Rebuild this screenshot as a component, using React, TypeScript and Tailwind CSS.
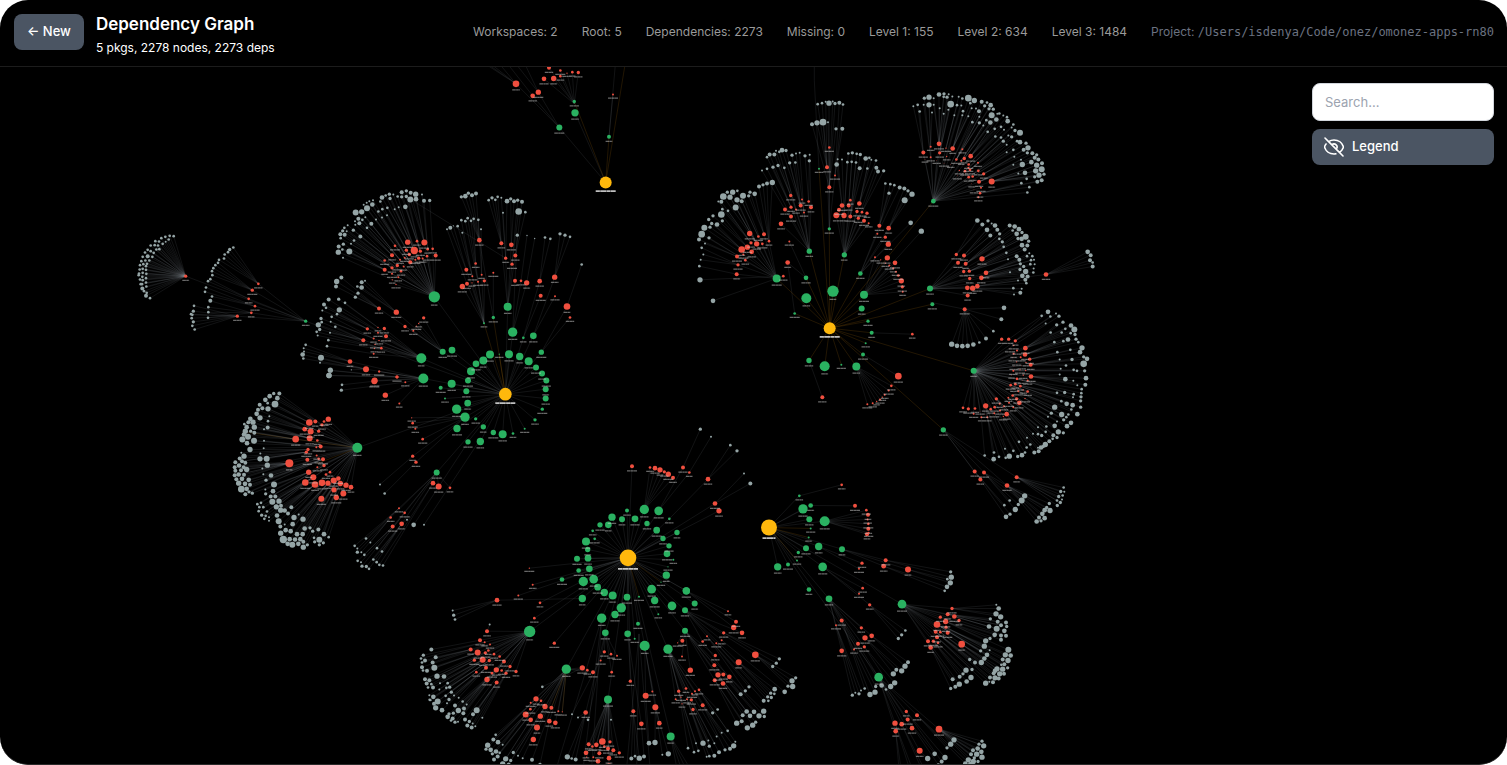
type Dot = { x: number; y: number; r: number };
type Kind = "root" | "direct" | "level1" | "level2";
type Edge = { a: Dot; b: Dot; warm?: boolean };

const FILL: Record<Kind, string> = {
  root: "#ffb80c",
  direct: "#2ab161",
  level1: "#f04f3f",
  level2: "#95a5a6",
};

const UNIT = 3;
const edges: Edge[] = [];
const dots: { d: Dot; kind: Kind }[] = [];

/** Parses "x y r, x y r, ..." in local units; the radius falls back to a default. */
function parse(text: string, ox: number, oy: number, fallback: number): Dot[] {
  return text
    .split(",")
    .map((s) => s.trim())
    .filter(Boolean)
    .map((s) => {
      const [x, y, r = fallback] = s.split(/\s+/).map(Number);
      return { x: ox + x / UNIT, y: oy + y / UNIT, r: r / UNIT };
    });
}

/** Picks the parent that lies closest to the ray from the hub to the leaf. */
function parentOf(leaf: Dot, hub: Dot, parents: Dot[]): Dot {
  const dx = leaf.x - hub.x;
  const dy = leaf.y - hub.y;
  const len = Math.hypot(dx, dy) || 1;
  let best = parents[0];
  let cost = Infinity;
  for (const p of parents) {
    const away = Math.abs((p.x - hub.x) * dy - (p.y - hub.y) * dx) / len;
    const c = (away + 1) / (p.r + 0.4);
    if (c < cost) {
      cost = c;
      best = p;
    }
  }
  return best;
}

function frame(ox: number, oy: number) {
  const point = (x: number, y: number): Dot => ({ x: ox + x / UNIT, y: oy + y / UNIT, r: 1 });
  return {
    root(x: number, y: number, r: number) {
      dots.push({ d: { ...point(x, y), r: r / UNIT }, kind: "root" });
    },
    ring(hx: number, hy: number, nodes: string, warm = false) {
      const hub = point(hx, hy);
      for (const d of parse(nodes, ox, oy, 8)) {
        dots.push({ d, kind: "direct" });
        edges.push({ a: hub, b: d, warm });
      }
    },
    fan(hx: number, hy: number, mids: string, leaves = "") {
      const hub = point(hx, hy);
      const parents = parse(mids, ox, oy, 4);
      for (const d of parents) {
        dots.push({ d, kind: "level1" });
        edges.push({ a: hub, b: d });
      }
      for (const d of parse(leaves, ox, oy, 4)) {
        dots.push({ d, kind: "level2" });
        edges.push({ a: parents.length ? parentOf(d, hub, parents) : hub, b: d });
      }
    },
    link(ax: number, ay: number, bx: number, by: number, warm = false) {
      edges.push({ a: point(ax, ay), b: point(bx, by), warm });
    },
  };
}

/* Far left packages */
const west = frame(130, 180);
west.fan(526, 422, "167 287 5", "131 167,119 166,106 169,116 177,94 173,87 183,76 182,98 190,107 184 3,84 195,74 194,62 195,79 207,88 206,53 208,71 217,62 212,45 216,53 227 6,67 229,38 229,46 240,58 240,34 242,40 251,51 250,30 254,48 257,38 265,29 267,48 268,38 277,27 279,49 280,37 289,26 284,48 293,30 297,38 299,48 306,36 311,32 311,49 318,37 324 6,42 332,50 337,48 346 6,60 353");
west.fan(526, 422, "385 310 4,367 329 5,356 355 4,375 377 4,364 397 4", "310 201,299 207 5,294 215,284 222,282 234,267 238,264 247,256 254,250 263,246 272,247 284,241 296,234 302,228 321,225 334,246 348,241 361 6,235 380,235 395,234 412");
west.fan(526, 422, "322 407 5", "192 376,190 392 5,187 403,183 401,185 413,190 424 5,187 436,194 447");
west.fan(913, 349,
  "833 185 8,861 182 4,883 186 9,853 210 11,829 209 5,795 196 4,786 224 6,764 240 4,764 268 6,786 262 5,802 255 5,810 238 3,871 212 5,893 206 4,908 205 4,917 225 6,891 227 4,838 222 5,841 245 6,866 233 5,856 238 3,878 234 3,824 232 3,821 258 3,813 272 4,786 280 3,805 290 3,798 312 2,787 298 2",
  "899 60 5,882 61 6,876 42 3,857 41 8,842 37 6,829 31 5,829 48 5,815 35 6,815 49 5,803 48,790 42 3,778 41 5,780 54 5,767 45,756 51 7,751 63,858 56 7,841 57 9,826 79 7,806 80 3,794 86 3,772 82,757 86,745 93,771 104 3,756 111 3,738 117 3,727 72 7,729 59 3,718 62 3,710 67 3,701 73 3,711 83 9,695 94 8,677 96 9,724 130 6,711 142,706 110 3,697 118,685 115 6,675 122 3,676 133 3,688 128 6,670 149 5,653 134 3,643 142,650 152 3,638 151 5,631 161 6,644 163 6,632 173,691 168 6,672 180,663 190 3,640 191 5,626 198 6,637 207,625 215 8,658 213 9,639 232 3");
west.fan(938, 514, "747 384 6,799 395 8", "705 301 3,695 305 6,682 318,695 321 7,684 338 5,676 350 5,634 291 6,620 303 8,618 318 6");
west.fan(938, 514, "825 438 5,881 412 5,866 429 2,850 451 3,859 437 2");
west.fan(874, 533,
  "712 445 5,763 444 5,744 441 2,700 479 6,768 467 6,754 503 4,744 457 3,731 474 3,747 480 2,735 492 2,733 504 2,731 520 3",
  "596 357 6,626 356 5,582 372 6,588 382,577 390 3,628 388 8,645 367,621 401,605 409,573 414 5,575 425,602 424 3,565 433 8,616 439,569 447 5,560 454,600 457 3,563 465 3,595 479,591 497");
west.fan(880, 594, "660 543 7,708 566 9,748 573 3,801 589 5,734 600 9", "527 493,521 503 3,518 522 7,522 513 3,520 534,573 532 9,570 547 3,601 569 8,597 585 8,664 568 2");

/* North-west workspace */
const north = frame(430, 60);
north.ring(226, 1001, "13 709 17,38 874 9,66 869 10,233 739 12,248 815 14,280 832 4,310 826 10,334 875 8,180 882 12,237 881 12,269 888 11,296 902 12,318 921 9,336 939 9,349 960 9,347 986 9,347 1014 9,337 1046 5,315 1078 5,284 1105 3,249 1119 4,218 1121 12,190 1116 8,151 1143 11,114 1144 8,160 1099 8,137 1075 5,81 1104 11,105 1070 14,80 1046 14,113 1028 10,109 992 9,114 960 9,123 932 12,138 910 10,160 900 12,65 970 12,32 982 6,45 1014 3,-20 954 15,-26 893 15,-218 1162 15,20 1236 9,-373 782 5");
north.ring(226, 1001, "190 771 5,162 788 3,208 881 2", true);
north.root(226, 1001, 19);
north.fan(162, 788, "109 628 6,137 609 4,127 647 3,155 643 3,163 661 5,144 664 3,111 670 6,97 678 8,126 667 2", "51 506 3,61 502 6,70 496 2,83 497,97 517 3,94 479,106 482,113 473,123 481,131 475,145 478,153 506 3");
north.fan(190, 771, "148 539 7,190 637 3", "94 409 5,106 407 7,115 398 5,126 404 6,138 399 6");
north.fan(233, 739, "214 548 6,244 553 7,227 593 5,256 585 6,246 611 5", "176 419,186 412 5,196 418,203 409,214 412 3,219 457 3,231 422 7,242 415 5,252 422 6,263 419 5,276 424 6,266 453 10,286 455,-90 397 1");
north.fan(248, 815, "255 661 6,273 661 4,290 667 8", "262 524 5,291 525 2,314 534 2");
north.fan(280, 832, "329 662 7,332 706 6", "345 531,361 535");
north.fan(310, 826, "374 650 8,375 707 3", "390 520 5,405 524 5,420 529");
north.fan(334, 875, "411 738 10,420 771 4", "455 612");
north.ring(527, 366, "388 201 9,435 157 11");
north.ring(527, 366, "433 123 5,537 229 6", true);
north.link(527, 366, 587, 0, true);
north.link(537, 229, 557, 0);
north.root(527, 366, 18);
north.fan(388, 201, "308 106 7,325 95 8,258 70 10", "150 0,165 5,180 8,200 0,225 0,250 0,280 0");
north.fan(433, 130, "342 55 7,371 54 8,357 22 6,391 30 4,391 47 4,411 38 2,427 35 4,445 36 5");
north.fan(537, 229, "549 102 3");

/* South-west fan of the north-west workspace */
const sw = frame(220, 370);
sw.fan(413, 232,
  "325 146 8,312 153 4,286 153 6,268 156 10,254 176 7,272 183 9,227 206 10,208 278 12,269 203 9,296 182 5,306 163 5,302 228 6,292 210 4,264 237 5,259 245 5,289 230 3,262 268 6,290 255 3,296 265 4,309 266 6,312 285 5,292 290 3,266 305 8,280 320 9,256 336 10,285 342 10,306 337 10,324 338 8,341 330 9,355 324 7,361 339 8,378 344 8,393 350 7,370 369 9,349 381 8,342 358 8,304 385 9,330 305 4,318 312 4",
  "178 69 6,161 69 5,172 83 7,149 77 7,136 88 7,165 101 10,144 115 8,143 98,119 103 6,127 113 6,114 118 6,110 130 7,120 142 8,148 137 3,144 152,143 171 6,132 176 3,91 145 7,85 155 6,99 155 8,103 170 8,73 161,80 170 7,76 182 8,92 182 5,67 207 9,84 199 9,102 211 9,81 218 7,90 237 8,72 192 7,103 187 6,132 211 3,131 233 3,121 249 3,64 247 3,72 257 8,59 264 6,46 275 6,44 290 6,66 272 6,76 277 6,57 285 7,71 290 6,80 297 8,63 299 6,46 301 6,44 314 6,56 312 7,72 313 6,49 326 6,66 325 7,86 328 7,56 338 8,75 340 7,90 343 6,64 356 10,80 355 7,76 371 6,87 364 5,97 368 5,120 265 8,140 265 9,142 284 8,127 294 3,130 311 3,138 329 5,153 315 7,162 342 9,159 362 7,152 378 6,166 378 6,157 394 9,177 392 8,169 409 8,183 406 6,171 435 7,182 419 8,176 452 9,194 420 7,214 410 6,204 429 6,222 441 8,236 432 3,249 446 8,218 461 7,194 462 3,181 468 6,182 488 8,190 507 11,203 520 7,217 523 9,235 520 7,250 530 8,262 523 5,250 514 6,241 506 7,225 507 7,209 506 7,197 479 7,212 482 7,231 491 7,248 491 7,254 474 7,270 472 5,278 482 5,295 477 6,312 491 7,326 500,298 508 9,282 502,284 514 5,298 523 5,310 517 5,112 401,123 397,118 410,130 410,116 422,125 434 5,141 423,137 436,133 445,147 440 3,147 451 3,136 357 3,137 370 5");
sw.link(227, 206, 85, 186, true);
sw.link(413, 232, 227, 206, true);
sw.link(413, 232, 290, 280, true);
sw.fan(609, 24, "463 32 9,496 74 8,531 20 4,538 99 3,556 35 3,477 3 3", "327 15 8,331 0 6,366 43,364 59 5");
sw.fan(650, 306, "639 338 7,656 348 9,690 352 4,537 413 3,554 427 4,512 441 4,518 468 6,545 460 7", "438 504,451 516 3,404 526,412 534 3,412 545 5,424 545 3,433 553,413 571,423 575 3,426 587 5,439 588 5,447 595,460 567,470 575,478 583,489 585,471 533,486 543,561 448 3");
sw.fan(735, 140, "575 142 2,578 158 4,586 175 3,608 206 4,578 257 5,588 275 5", "480 342 3,494 369");
sw.fan(744, 215, "", "581 463 7");
sw.fan(776, 214, "", "612 463 3");

/* North-east workspace */
const ne = frame(680, 80);
ne.ring(449, 743, "290 594 12,388 512 8,448 445 5,493 523 8,541 579 7,552 643 12,545 684 9,564 722 5,575 757 6,557 788 3,549 822 6,529 858 12,484 853 3,434 857 15,387 840 8,344 699 4,379 653 15,378 592 7,459 632 17,417 265 3,760 362 7,750 624 9,757 671 6,881 871 9,790 1048 8", true);
ne.link(403, -60, 403, 0);
ne.link(403, 0, 417, 265);
ne.root(449, 743, 18);
ne.fan(290, 594,
  "209 459 8,252 461 6,235 468 4,267 482 4,230 490 8,247 490 4,213 487 5,202 500 8,185 507 10,215 514 7,171 528 6,196 539 4,174 553 5,170 581 6,310 587 4,190 522 3",
  "277 306 8,261 309 6,249 313 5,237 318 6,224 340 7,210 335 5,206 346 5,189 346 9,185 362 6,171 358 8,167 381 9,172 331,158 335 8,142 335 5,150 350 8,130 348 10,124 364 6,115 363 3,144 391,127 386,124 402 10,127 421 5,99 406 5,86 417 5,111 432 7,95 429 5,90 440 5,73 442 9,65 461 10,57 477 6,87 472 5,75 489 3,65 502,70 522 3,62 538 3,58 557,60 598 8,99 661 7");
ne.fan(388, 512, "303 430 7,332 345 5,366 357 3,386 363 4,362 375 6,333 380 5,315 387 6,393 380 6,372 396 3,333 408 6,348 387 3",
  "246 270 3,261 265,279 260 5,294 255 5,313 262,329 247 5,346 246,388 241 5,261 230,269 222 6,283 222 6,288 211 3,298 214,306 209 7,318 210 5,336 224 5,348 219 3,359 217 3,375 226 5,389 223 3");
ne.fan(378, 592, "328 483 3,323 546 7");
ne.link(323, 546, 344, 699);
ne.fan(448, 445, "448 320 6,465 285 3,441 260 6,448 201 4", "396 131 6,411 127 8,429 125 10,444 125 3,468 145 5,487 145 6,413 71,426 68,437 64 3,447 68 8,458 63 3,465 69 5,478 67 6,489 72");
ne.fan(493, 523, "511 359 4,538 369 7,486 375 7,506 375 6,477 388 6,469 404 9,492 405 8,511 408 6,531 393 5,546 395 4,561 398 5,535 413 5,552 421 6,566 428 3",
  "473 236 3,486 237 3,502 245,515 244,528 246,470 252 7,505 219,517 217 5,530 220,541 222 5,557 234 7,568 232,574 238 3,588 240,539 263 6,562 264,589 262 6,594 273 6,611 271 5");
ne.fan(541, 579, "598 436 6,626 443 7,592 460 3,616 470 5,625 491 8", "616 309,631 311,643 314,659 321 6,673 324 6,684 331 5,696 341 8,674 359 9,627 338 5");
ne.fan(552, 643, "585 530 3,622 532 8,602 538 2,645 547 7,616 548 2,628 555 3,640 563 3,648 574 3,655 585 4,664 601 8,667 619 5,668 634 3");
ne.fan(529, 858, "634 916 4,626 930 3,614 943 3,600 957 3,590 963 2,578 968 3,562 971 3,607 950 2");
ne.fan(549, 822, "655 887 10");
ne.fan(575, 757, "697 761 4");
ne.fan(387, 840, "427 950 6");
ne.fan(541, 579, "", "692 427 7");
ne.fan(552, 643, "", "724 452 8");

/* Upper-right fans */
const far = frame(900, 80);
far.fan(100, 362,
  "117 190 7,92 199 3,70 216 6,158 204 7,119 217 5,138 203 2,187 206 3,212 227 7,193 234 5,92 230 3,169 237 4,234 247 3,206 252 4,184 241 3,235 271 4,210 268 4,251 280 5,195 272 4,275 303 9,237 304 6,206 290 4,218 288 4,243 322 3,240 338 4,235 350 3,205 262 3,140 228 2,178 270 2,75 236 1,110 240 1,132 248 1,152 252 1,172 286 1,215 310 1,222 328 1",
  "40 77 3,53 73,59 93,73 53 5,87 50 8,101 53 3,71 73 3,87 73 8,101 73 3,96 96 3,117 42 7,132 40 5,131 49,141 50 5,146 41 3,119 83 3,145 88 3,131 100 3,152 71 10,157 48 3,171 74,176 49 3,187 54,184 75 3,189 92,163 104 3,187 104 3,205 53 10,223 60 8,211 68,215 83 3,228 84 3,237 92 6,205 107 3,217 125,238 109 3,238 127 5,245 64 6,261 66,254 76 5,272 74 7,267 85 5,280 86 5,259 119,275 104 9,289 117 7,271 126 7,250 135 3,263 154,292 100 3,298 99,310 105 3,321 110,323 122 7,303 139,284 145,312 148 3,286 168,303 171,310 182 5,320 193 3,340 132,335 141 3,345 150 5,360 157 9,325 165 3,335 169 5,351 182,360 185 7,320 215 3,340 208,378 188 5,371 208 6,384 202 8,382 217 5,343 229 3,363 238 3,397 218 6,410 223 5,404 232 6,415 237 6,394 245 7,426 248 6,410 254 8,367 252 8,340 253 3,425 266 9,407 271 8,432 281 5,375 277 7,355 279 3,417 284 8,404 289 5,425 299 6,412 304 6,380 295,364 308,388 320,382 336");
far.fan(90, 625,
  "169 522 5,192 525 6,174 547 6,197 550 6,191 573 5,208 572 5,209 594 5,246 535 8,258 577 7,244 592 7,232 617 7,218 623 8,202 622 7,203 645 6",
  "232 420 7,264 421 5,247 432 6,275 429 3,285 435 7,261 448 7,292 448 6,271 465 6,299 460 5,298 475,307 484 5,311 499,319 517,324 536 3,330 575 3,329 435 6,344 438 7,338 450,357 446 7,350 460 7,366 456 5,377 469 9,354 474 5,365 475 7,386 482 5,366 494 7,382 495 6,374 507 6,388 518 3,350 527 6,358 538 6,381 527,397 527,393 539,402 538 3,361 550 5,391 551,404 551 3,371 558 5,360 567 5,377 573 8,401 564 3,400 576,367 586 7,383 588 6,376 598 6,354 600 3,379 608,340 623,365 625 3,342 642 3,361 637 6");
far.fan(90, 625, "438 582 7", "563 514 7,572 524 6,570 539 6,578 546,578 558 6");

/* Right-hand fans */
const east = frame(860, 300);
east.fan(210, 5, "314 26 6", "432 22 7,424 56 6,400 92,378 114 6,358 126,340 132 7,323 136 7,307 137 7,291 136 7,275 131 8");
east.fan(341, 211,
  "425 116 5,446 116 5,466 121 5,496 143 7,461 135 2,495 162 7,471 150 3,461 160 3,509 176 5,482 170 3,512 193 6,470 184 2,498 186 2,460 211 3,480 208 2,497 210 2,513 228 7,471 235 4,490 224 2,452 254 4,466 251 4,503 240 3,481 257 4,503 273 4,475 272 3,490 268 2,458 285 4,470 295 5,478 307 7,495 294 2,445 292 3,409 295 5,419 310 3,432 317 3,447 307 3,377 316 8,404 320 4,392 326 4,345 324 4,325 325 5,309 322 4,341 340 3,364 350 3,382 350 3,403 338 3,440 341 7,420 330 3,460 320 3,430 348 2,450 145 1,457 172 1,462 198 1,455 224 1,485 196 1,488 240 1,462 264 1,360 332 1,375 342 1",
  "564 34 7,545 46,571 48,588 39 3,597 47 5,557 69 3,609 65 5,590 73 5,633 75 7,643 87 9,616 85,572 96,605 96,632 98,645 102 5,624 117 7,648 116 5,583 125,610 122,655 125,666 142 8,592 155,631 148,660 155 7,599 177 3,636 177 5,671 169 5,681 175 7,671 190 10,618 195,602 205 3,641 208,674 211 5,599 222 3,651 211,616 236 7,678 233 7,676 253 6,640 241 3,652 254 3,665 266,591 277,614 276 5,664 278,641 281,639 290 3,663 289 5,620 310 7,604 302,638 314 7,662 301 5,584 320 8,634 327 4,662 320 5,574 338 5,605 342 8,619 350,625 342,652 341 7,564 349 3,633 367 7,591 363 3,611 358 5,584 376 7,621 377 7,559 378,557 394,595 394 8,610 397 5,534 380 3,534 401,545 405 5,580 404 6,591 411 5,519 400 3,501 412 3,568 422 6,556 432 8,578 415,543 441 7,511 432,523 456 6,536 452 6,550 438 5,477 424,500 441,486 464 7,495 456,534 442 3,460 451,448 467 8,473 468 5,435 445 3,437 472,402 456,417 469,401 476 7,374 465");
east.fan(250, 388, "344 513 6,372 516 6,361 537 6", "449 600,433 614,494 586 8,485 600 9,475 612 5,466 627 8,450 641 5,438 649 7");
east.fan(250, 388, "441 555 7", "568 609 5,554 629 7,570 630 8,560 621 5,547 640 7,537 651 6,554 653 7,530 663 7,543 661 5");
east.fan(250, 388, "470 530 6", "611 561,602 573 5,613 574 3,596 588 5,608 585,606 597 3,601 606 5,592 615 5,591 600");

/* South workspace */
const south = frame(410, 490);
south.ring(654, 202, "703 57 14,746 61 13,651 60 6,675 85 10,636 86 9,711 99 8,740 119 10,759 144 8,777 166 8,801 126 8,778 85 4,771 190 10,790 208 3,774 229 2,769 254 11,725 296 13,734 330 11,786 346 13,829 301 11,854 339 9,825 359 9,825 421 9,745 371 3,684 400 6,653 430 10,674 445 3,651 320 10,634 352 14,615 372 11,608 315 12,583 306 11,563 290 10,551 266 13,520 273 14,517 324 11,538 235 10,506 240 7,534 203 10,501 205 9,533 177 8,528 153 12,554 145 4,548 121 4,570 103 8,595 103 10,606 80 11,456 267 7,575 383 14,586 427 10,359 423 17,469 536 14,594 627 12,704 466 15,774 476 14,782 738 12");
south.ring(654, 202, "753 275 2,687 319 3", true);
south.root(654, 202, 25);
south.fan(359, 423,
  "231 422 6,210 449 6,182 477 6,203 486 9,193 509 5,218 508 9,226 487 5,235 480 4,252 491 4,269 498 4,282 513 6,300 528 5,318 543 5,259 538 8,228 532 6,199 545 4,231 567 8,260 576 6,288 548 5,246 548 4,275 540 4,238 510 5,224 455 3,240 462 3",
  "64 477 6,40 494 5,77 500 6,33 504,45 510 6,36 516,68 516 6,36 530 6,73 532 9,51 541 6,39 540,81 557 8,102 558 7,45 566 6,58 569 6,50 579 6,90 578 3,113 578,64 581,69 591 6,54 591,119 590 5,109 592,88 597 3,124 605 5,107 616,132 615 3,58 614 3,70 619 7,59 628,117 627 5,146 622 3,83 633 9,72 640 6,62 629 3,111 638 3,77 652 8,96 659 7,135 645 6,145 660 8,158 633,170 642 3,162 654 6,160 668 6,130 668 5,117 670 5,113 679 7,128 684 6,123 690,135 695 5,144 694 3,200 659 9,189 671 6,217 682 3,165 687 6,178 693 5,188 699 3,172 705 6,185 711 6,196 707 3,239 402 3");
south.fan(469, 536, "517 532 8,532 539 4,549 545 6", "397 589");
south.fan(469, 536,
  "378 625 8,393 631 4,362 637 3,405 648 8,424 652 6,347 672 9,362 688 7,391 677 8,418 692 7,436 697 7,381 711 9,370 747 8,361 656 4,445 662 3,457 664 2",
  "257 733,250 747 6,264 755 7,278 763 3,233 764 8,242 778 7,228 776 5,258 783 7,247 790 5,269 787,263 798 6,252 807 6,287 805 8,302 810 5,278 820 8,296 822 6,310 786 5,324 796 3,338 803 3,366 808 6,390 822 5");
south.link(469, 536, 424, 652, true);
south.link(469, 536, 457, 664, true);
south.fan(594, 627, "577 753 10,600 754 5,559 763 7,536 761 6,547 768 4,528 787 7,568 788 6,594 774 6,610 779 6,628 787 5,597 803 7,564 812 7,583 768 4,597 825 7,550 800 3,530 800 2");
south.fan(586, 427, "583 484 5,572 510 3,603 491 4,621 496 3,605 545 4,527 666 7", "472 799 8,485 804,497 807 6,534 688,504 681 3,486 671 3");
south.fan(594, 627, "", "603 688 3");
south.fan(654, 202, "358 233 2,368 283 3,325 315 3,390 337 4,373 383 4,433 458 5,661 572 5");
south.fan(517, 324, "261 329 7", "128 360 3,131 374 5,135 387");
south.fan(653, 430, "670 662 6,694 700 7", "664 804 6,675 797,688 803 8,702 798 6");
south.fan(704, 466, "707 616 9,727 603 3,736 650 9,748 698 7", "717 758 7,735 756 8,775 790 8,757 793 3");
for (const x of [800, 812, 825, 838]) south.link(782, 738, x, 830);
for (const x of [440, 520, 545, 650, 680, 720]) south.link(x < 560 ? 575 : 687, x < 560 ? 383 : 430, x, 830);

const se = frame(620, 420);
se.ring(24, 412, "199 511 11");
se.fan(24, 412, "36 137 6");
se.fan(73, 267, "90 141 4,105 143 7,120 148 8,133 154 5,145 161 8,159 172 6");
se.fan(116, 270, "189 141 6", "241 26 5");
se.fan(116, 270, "208 156 4", "273 49 3");
se.fan(148, 295, "264 176 7", "331 74,351 91 5");
se.fan(24, 412, "285 249 7,297 271 8", "372 159 3,391 189 6");
se.fan(144, 686,
  "176 812 5,198 804 4,167 836 3,183 830 2,201 836 3,214 838 5,225 812 3,237 808 4,216 820 3,219 867 5,248 854 6,186 850 2",
  "293 867,278 877 5,323 931,305 937 3,290 948 3,204 983,228 968 3,222 995,235 991,249 968 8,265 960 3,268 977 5,283 968 3,268 1007,283 1006 6,297 995 6,315 988 5,330 985 6,341 976 8,346 964 3,260 1009 3");
se.fan(195, 631, "187 661 6,173 667 2,186 708 3,211 749 8");
se.fan(199, 511, "324 572 3,348 604 6,341 621 8");
se.fan(195, 569,
  "366 637 7,311 637 5,261 647 3,248 663 4,289 668 3,305 659 3,406 703 10,356 725 9",
  "478 715 5,469 728 5,458 738 5,527 772 5,516 781 8,518 798 8,504 797 5,494 814 7,464 806 7,452 818 5,463 820,443 829 5,454 831 5,431 841 6,445 841,387 799 5,376 811 5,362 821 6");
se.fan(195, 631, "286 705 5,283 734 6,294 763 8,310 762 6,328 769 7,309 789 7,284 779 6", "380 873 7,402 874 7,431 872 8,368 884 6,390 886 7,417 886 8,433 888 5,350 908 8,365 902 6,382 922 8,398 914 8,407 905 5");

/* South-east workspace */
const corner = frame(780, 480);
corner.ring(-33, 141, "58 46 4,69 85 14,92 75 7,88 116 9,134 122 15,116 198 11,78 203 9,186 206 9,55 216 5,24 252 6,-7 259 11,128 259 13,87 327 7,147 355 10,366 371 13,296 590 13");
corner.ring(-33, 141, "92 144 3,86 171 3,51 240 3", true);
corner.root(-33, 141, 24);
corner.fan(92, 75, "225 76 6");
corner.fan(58, 46, "185 13 4");
corner.fan(134, 122, "259 89 4,264 103 6,263 117 3,265 130 4,265 145 6,266 157 3,261 161 6");
corner.fan(116, 198, "246 248 5,237 265 3");
corner.fan(186, 206, "311 257 7,317 239 6,384 267 9", "512 274 5,514 290 8,502 296,511 307 8,501 319 7,494 331");
corner.fan(128, 259, "248 323 4,237 340 3,269 373 5", "376 450,365 463 5,355 474 5");
corner.fan(366, 371,
  "516 384 5,503 401 6,481 410 5,523 408 7,471 432 10,497 423 8,537 420 5,498 440 5,467 454 6,481 455 4,503 457 6,545 491 10,444 482 6,460 482 5,471 470 6,474 487 4,452 501 7",
  "649 373 3,656 384 7,648 400 8,662 409 8,631 415 5,653 424 6,678 426 6,627 438 7,663 434 6,680 438 5,650 445 9,673 451 7,644 463 7,663 465 6,678 466 6,663 478 6,630 474 5,617 481 8,613 497 8,602 511 5,621 523 7,629 509 3,613 534 7,604 546 8,585 546 6,569 537 5,685 508 9,676 523 8,692 525 7,668 537 6,684 540 8,673 551 6,683 562 5,664 553,651 565 8,668 566 8,645 571 7,641 578 6,659 580 8,672 580 6,630 591 6,645 592 8,656 594 6,617 608 8,628 604 3,639 605 6,558 569 8,576 567 5,549 580 5,539 589 6,573 591 8,518 596 6,560 603 7,538 611 8,526 619 6,512 624 5");
corner.fan(147, 355,
  "185 420 6,168 434 3,244 442 5,255 472 8,275 466 7,234 490 6,253 499 5,222 507 3,185 511 7",
  "217 644 5,226 637 3,237 640 5,243 630 3,254 624,270 642 8,285 635 8,287 618 5,305 615 7,318 627,332 618 8,344 607 8,340 580 8,349 568 6,365 571 8,375 557 8,384 545 6");
corner.fan(296, 590,
  "379 693 5,411 704 6,383 717 6,345 728 8,365 731 7,347 752 7,396 743 7,477 746 10,419 811 9",
  "522 778 8,512 791 8,501 802 5,495 831 8,464 820 7,443 834 8,485 843 6,475 853 5,606 782 5,597 791 5,611 796 8,593 804 7,579 809 6,604 814 7,573 821 6,590 821 8,606 830 8,583 832 5,565 838 8,580 843 8,594 843 5,556 849 7,572 852 8,360 900,368 900,400 900,410 900,440 900,450 900");

const edgePath = (warm: boolean) =>
  edges
    .filter((e) => Boolean(e.warm) === warm)
    .map((e) => `M${e.a.x.toFixed(1)} ${e.a.y.toFixed(1)}L${e.b.x.toFixed(1)} ${e.b.y.toFixed(1)}`);

const coolEdges = edgePath(false);
const warmEdges = edgePath(true);
const captions = dots
  .filter((n) => n.kind === "direct" || n.kind === "level1")
  .map(({ d }, i) => {
    const half = 3.4 + ((i * 7) % 5) * 0.4;
    return `M${(d.x - half).toFixed(1)} ${(d.y + d.r + 2.6).toFixed(1)}h${(half * 2).toFixed(1)}`;
  })
  .join("");
const rootCaptions = dots
  .filter((n) => n.kind === "root")
  .map(({ d }) => {
    const half = d.x > 740 && d.x < 800 ? 6.5 : 10;
    return `M${(d.x - half).toFixed(1)} ${(d.y + d.r + 2.6).toFixed(1)}h${half * 2}`;
  })
  .join("");

function Graph() {
  return (
    <svg
      className="absolute inset-0 h-full w-full"
      viewBox="0 66 1507 698"
      preserveAspectRatio="xMidYMid slice"
      role="img"
      aria-label="Dependency graph"
    >
      <g fill="none" stroke="#95a5a6" strokeOpacity={0.15} strokeWidth={0.8}>
        {coolEdges.map((d, i) => (
          <path key={i} d={d} />
        ))}
      </g>
      <g fill="none" stroke="#f39c12" strokeOpacity={0.18} strokeWidth={0.8}>
        {warmEdges.map((d, i) => (
          <path key={i} d={d} />
        ))}
      </g>
      {dots.map(({ d, kind }, i) => (
        <circle key={i} cx={d.x} cy={d.y} r={d.r} fill={FILL[kind]} />
      ))}
      <path d={captions} stroke="#d0d0d0" strokeOpacity={0.5} strokeWidth={1.3} strokeDasharray="3.6 0.3 2.4 0.2" />
      <path d={rootCaptions} stroke="#ffffff" strokeOpacity={0.75} strokeWidth={1.7} strokeDasharray="4.2 0.3 6 0.3" />
    </svg>
  );
}

function EyeSlash() {
  return (
    <svg
      className="size-5 shrink-0"
      viewBox="2 2 20 20"
      fill="none"
      stroke="currentColor"
      strokeWidth={1.6}
      strokeLinecap="round"
      strokeLinejoin="round"
      aria-hidden="true"
    >
      <path d="M13.875 18.825A10.05 10.05 0 0112 19c-4.478 0-8.268-2.943-9.543-7a9.97 9.97 0 011.563-3.029m5.858.908a3 3 0 114.243 4.243M9.878 9.878l4.242 4.242M9.88 9.88l-3.29-3.29m7.532 7.532l3.29 3.29M3 3l3.59 3.59m0 0A9.953 9.953 0 0112 5c4.478 0 8.268 2.943 9.543 7a10.025 10.025 0 01-4.132 5.411m0 0L21 21" />
    </svg>
  );
}

const STATS: [string, number][] = [
  ["Workspaces", 2],
  ["Root", 5],
  ["Dependencies", 2273],
  ["Missing", 0],
  ["Level 1", 155],
  ["Level 2", 634],
  ["Level 3", 1484],
];

export default function App() {
  return (
    <div className="bg-white font-['Inter',sans-serif]">
      <div className="flex min-h-screen flex-col overflow-hidden rounded-[28px] border-b border-[#2a2a2a] bg-black text-white">
        <header className="flex items-center justify-between gap-6 border-b border-[#1c1c1c] pt-2 pr-[13px] pb-2.5 pl-3.5">
          <div className="flex items-center gap-3">
            <button type="button" className="h-9 rounded-lg bg-[#4b5563] px-[13px] text-[13px] font-medium whitespace-nowrap">
              ← New
            </button>
            <div className="whitespace-nowrap">
              <h1 className="text-[17px] leading-8 font-semibold">Dependency Graph</h1>
              <p className="text-xs leading-4">5 pkgs, 2278 nodes, 2273 deps</p>
            </div>
          </div>
          <div className="flex items-center gap-6 text-xs whitespace-nowrap text-[#9a9a9a]">
            {STATS.map(([name, value]) => (
              <span key={name}>
                {name}: {value}
              </span>
            ))}
            <span className="text-[#6b7280]">
              Project: <span className="font-['DejaVu_Sans_Mono',monospace]">/Users/isdenya/Code/onez/omonez-apps-rn80</span>
            </span>
          </div>
        </header>
        <main className="relative flex flex-1 flex-col">
          <Graph />
          <div className="relative mt-4 mr-[13px] flex w-[182px] flex-col gap-2 self-end">
            <input
              type="search"
              aria-label="Search"
              placeholder="Search..."
              className="h-[38px] w-full rounded-lg border border-[#d1d5db] bg-white px-3 text-[13px] text-[#111827] placeholder:text-[#9ca3af]"
            />
            <button type="button" className="flex h-9 items-center gap-2 rounded-lg bg-[#4b5563] px-3 text-[13px] font-medium">
              <EyeSlash />
              Legend
            </button>
          </div>
        </main>
      </div>
    </div>
  );
}
